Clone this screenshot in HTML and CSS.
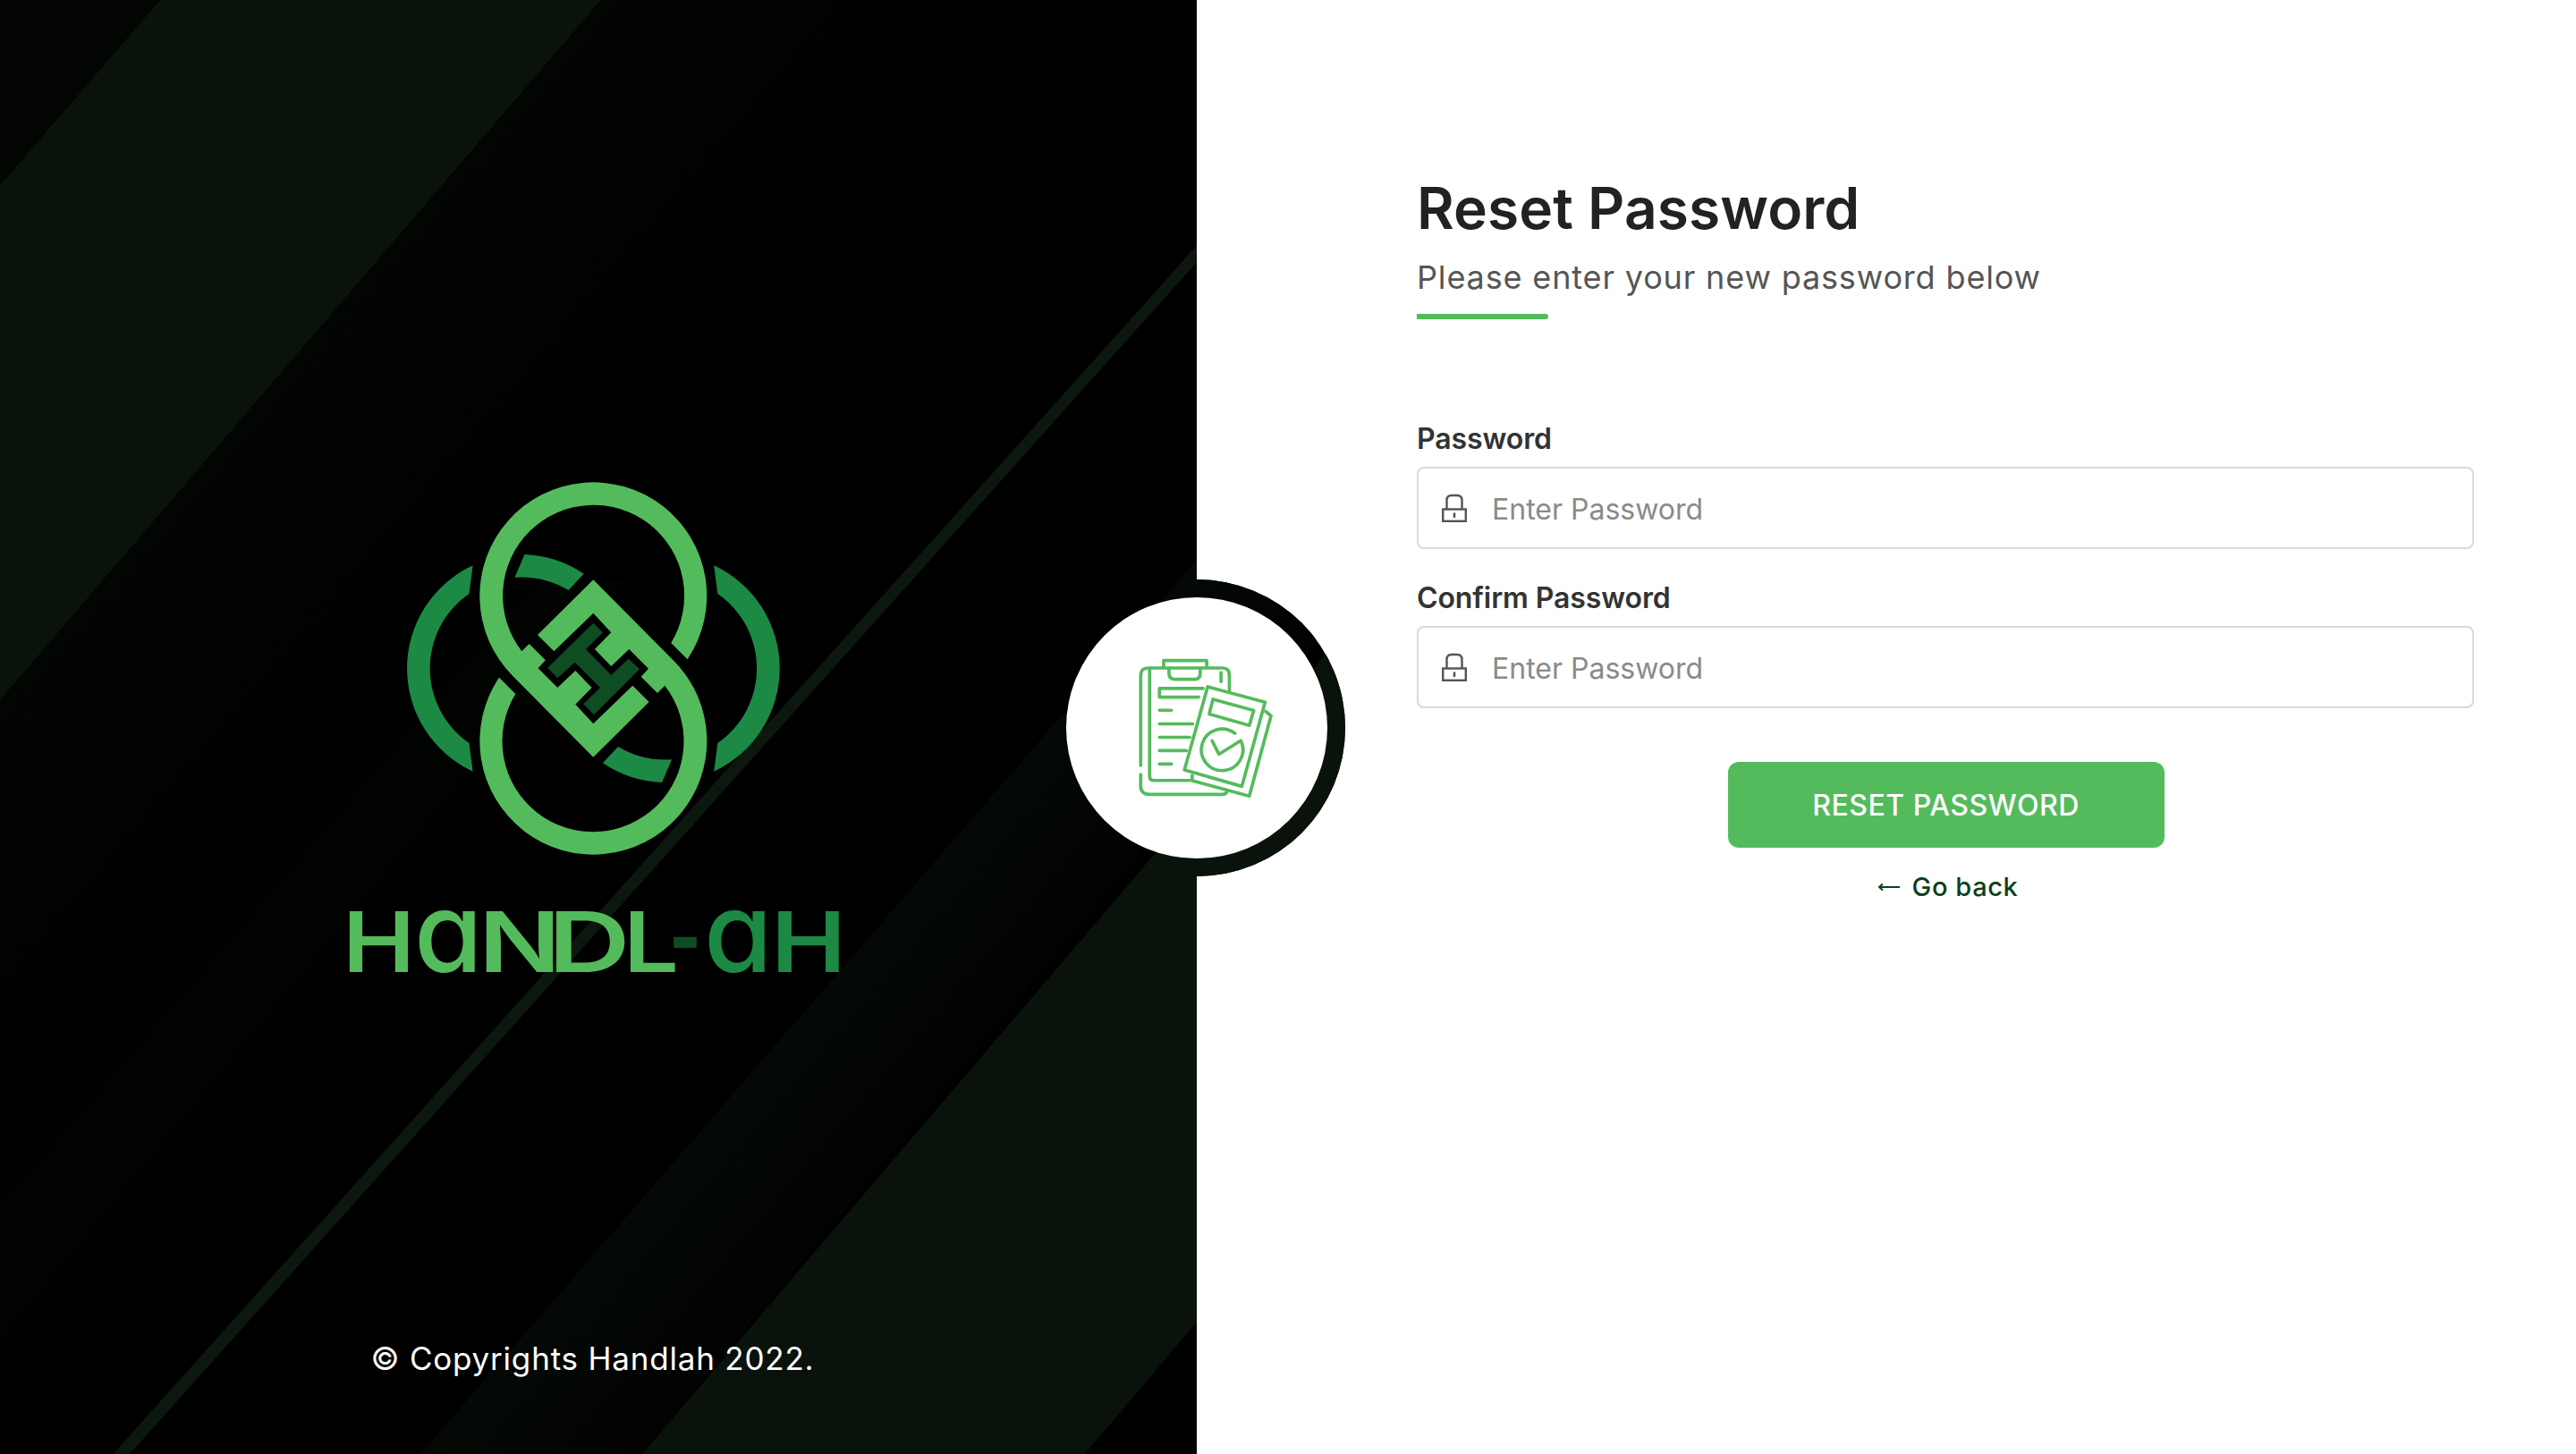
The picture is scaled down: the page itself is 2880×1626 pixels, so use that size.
FILE: index.html
```html
<!DOCTYPE html>
<html lang="en">
<head>
<meta charset="utf-8">
<title>Reset Password</title>
<link rel="stylesheet" href="styles.css">
</head>
<body>
<main class="page">
  <aside class="brand">
    <svg class="backdrop" viewBox="0 0 1510 1626" aria-hidden="true">
      <defs>
        <clipPath id="panelShape">
          <rect x="0" y="0" width="1338" height="1626"/>
          <circle cx="1338" cy="814" r="166"/>
        </clipPath>
        <linearGradient id="fadeC" gradientUnits="userSpaceOnUse" x1="927" y1="1100" x2="1066" y2="1219">
          <stop offset="0" stop-color="#040906"/>
          <stop offset="1" stop-color="#010201"/>
        </linearGradient>
        <linearGradient id="fadeA" gradientUnits="userSpaceOnUse" x1="672" y1="0" x2="900" y2="195">
          <stop offset="0" stop-color="#020502"/>
          <stop offset="1" stop-color="#000"/>
        </linearGradient>
      </defs>
      <g clip-path="url(#panelShape)">
        <rect class="bd-base" width="1510" height="1626"/>
        <polygon fill="url(#fadeA)" points="672,0 1100,0 0,1280 0,783"/>
        <polygon class="bd-corner" points="0,0 179,0 0,207"/>
        <polygon class="bd-band" points="179,0 672,0 0,783 0,207"/>
        <polygon class="bd-faint" points="0,1348 214,1100 600,650 700,650 0,1500"/>
        <polygon fill="url(#fadeC)" points="470,1626 1500,440 1700,440 718,1626"/>
        <polygon class="bd-band" points="718,1626 1167,1100 1700,476 2187,476 1213,1626"/>
        <polygon class="bd-line" points="126.5,1626 145,1626 1376.6,250 1360,250"/>
      </g>
    </svg>

    <div class="brand-body">
      <svg class="logo" viewBox="374 530 580 600" role="img" aria-label="Handl-ah logo">
        <g class="logo-dark">
          <path d="M528.6 632.3A127 127 0 0 0 528.6 862.7L524.5 831A101.5 101.5 0 0 1 524.5 664Z"/>
          <path d="M798.2 632.3A127 127 0 0 1 798.2 862.7L802.3 831A101.5 101.5 0 0 0 802.3 664Z"/>
          <path d="M586.5 620A127 127 0 0 1 652.7 641.7L635.5 660A101.5 101.5 0 0 0 575.5 645.7Z"/>
          <path d="M740.1 875A127 127 0 0 1 673.9 853.3L691.1 835A101.5 101.5 0 0 0 751.1 849.3Z"/>
        </g>
        <g class="logo-light">
          <path id="knot" d="M663.3 648.3L753.3 739A127 127 0 1 1 558 757.7L576.3 776A101.5 101.5 0 1 0 743.3 766.7L735 775L716.7 756.7L725 747.7L703.3 726L683.3 745L665 726L683.3 707.3L663.3 685.7L619.3 728.3L601 710Z"/>
          <use href="#knot" transform="rotate(180 663.3 747.5)"/>
        </g>
        <polygon class="logo-h" points="663.3,696.7 674,707.3 655,726 683.3,755 702.7,736.7 715,748.3 664,799.3 652.3,787.3 671,769 642.7,740.7 623.3,758.3 612.3,746.7"/>
        <text class="wordmark wm-light" x="383" y="1087" textLength="81" lengthAdjust="spacingAndGlyphs">H</text>
        <text class="wordmark wm-a wm-light" x="463" y="1087">a</text>
        <text class="wordmark wm-light" x="535" y="1087" textLength="92" lengthAdjust="spacingAndGlyphs">N</text>
        <text class="wordmark wm-light" x="612.7" y="1087" textLength="92" lengthAdjust="spacingAndGlyphs">D</text>
        <text class="wordmark wm-light" x="697" y="1087" textLength="62" lengthAdjust="spacingAndGlyphs">L</text>
        <text class="wordmark wm-deep" x="748" y="1081" textLength="36" lengthAdjust="spacingAndGlyphs">-</text>
        <text class="wordmark wm-a wm-dark" x="787" y="1087">a</text>
        <text class="wordmark wm-dark" x="862" y="1087" textLength="84" lengthAdjust="spacingAndGlyphs">H</text>
      </svg>
      <p class="copyright">© Copyrights Handlah 2022.</p>
    </div>

    <div class="badge">
      <svg class="badge-icon" viewBox="290 300 490 500" aria-hidden="true">
        <path d="M315 675V372Q315 347 340 347H590Q613 347 613 372V425"/>
        <path d="M315 705V745Q315 772 345 772H590Q600 772 605 764"/>
        <path d="M345 350V710Q345 725 358 725H480"/>
        <path d="M585 362V393"/>
        <path d="M392 342V322H537V342"/>
        <path d="M410 350V365Q410 385 430 385H497Q515 385 515 365V350"/>
        <path d="M525 416H378V445H510"/>
        <path d="M378 489H418M378 535H490M378 580H480M378 625H468M378 670H418"/>
        <path d="M540 410L733 462L655 745L462 690Z"/>
        <path d="M558 452L695 490L680 540L545 502Z"/>
        <path d="M632 567A70 70 0 1 0 652 592"/>
        <path d="M555 592L578 637L650 592"/>
        <path d="M735 493L753 508L680 778L488 726V708"/>
      </svg>
    </div>
  </aside>

  <section class="form-side">
    <h1 class="title">Reset Password</h1>
    <p class="subtitle">Please enter your new password below</p>
    <div class="accent"></div>

    <form class="form">
      <div class="field">
        <label class="label" for="password">Password</label>
        <div class="control">
          <svg class="lock" viewBox="0 0 28 32" aria-hidden="true">
            <path d="M5.5 18V7.5Q5.5 2 11 2H17Q22.5 2 22.5 7.5V18"/>
            <rect x="1.2" y="17.5" width="25.6" height="13.3"/>
            <path class="keyhole" d="M14 22.5V26"/>
          </svg>
          <input class="input" id="password" type="password" placeholder="Enter Password">
        </div>
      </div>
      <div class="field">
        <label class="label" for="confirm">Confirm Password</label>
        <div class="control">
          <svg class="lock" viewBox="0 0 28 32" aria-hidden="true">
            <path d="M5.5 18V7.5Q5.5 2 11 2H17Q22.5 2 22.5 7.5V18"/>
            <rect x="1.2" y="17.5" width="25.6" height="13.3"/>
            <path class="keyhole" d="M14 22.5V26"/>
          </svg>
          <input class="input" id="confirm" type="password" placeholder="Enter Password">
        </div>
      </div>
      <button class="submit" type="button">RESET PASSWORD</button>
      <a class="back" href="#">
        <svg class="back-arrow" viewBox="0 0 24 10" aria-hidden="true"><path d="M24 5H1M5 1.5L1 5L5 8.5"/></svg>
        Go back
      </a>
    </form>
  </section>
</main>
</body>
</html>
```

FILE: styles.css
```css
* { box-sizing: border-box; }

html, body {
  margin: 0;
  height: 100%;
  background: #fff;
}

body {
  font-family: "Inter", "Liberation Sans", sans-serif;
  color: #222;
}

.page {
  display: flex;
  width: 2880px;
  height: 1626px;
  overflow: hidden;
}

/* left brand panel */
.brand {
  position: relative;
  flex: 0 0 1338px;
  background: #000;
}

.backdrop {
  position: absolute;
  left: 0;
  top: 0;
  width: 1510px;
  height: 1626px;
}

.bd-base { fill: #000; }
.bd-corner { fill: #020502; }
.bd-band { fill: #09120b; }
.bd-faint { fill: #010301; }
.bd-line { fill: #0c180e; }

.brand-body {
  position: relative;
  height: 100%;
  padding: 530px 10px 0 0;
  display: flex;
  flex-direction: column;
  align-items: center;
}

.logo {
  display: block;
  width: 580px;
  height: 600px;
}

.logo-light path, .logo-light use { fill: #54bb5c; }
.logo-dark path { fill: #1c8a44; }
.logo-h { fill: #0e4c24; }

.wordmark {
  font-family: "Inter", "Liberation Sans", sans-serif;
  font-size: 93px;
  font-weight: 600;
  font-feature-settings: "cv11" 1;
}

.wm-light { fill: #54bb5c; }
.wm-dark { fill: #1c8a44; }
.wm-deep { fill: #0e4c24; font-weight: 800; }
.wm-a { font-size: 124px; font-weight: 500; }

.copyright {
  margin: 368px 0 0 -3px;
  font-size: 35px;
  line-height: 42px;
  letter-spacing: 0.8px;
  color: #fff;
}

.badge {
  position: absolute;
  left: 100%;
  top: 668px;
  width: 292px;
  height: 292px;
  margin-left: -146px;
  display: flex;
  align-items: center;
  justify-content: center;
  border-radius: 50%;
  background: #fff;
}

.badge-icon {
  width: 163px;
  height: 167px;
  margin-left: 20px;
  fill: none;
  stroke: #54bb5c;
  stroke-width: 11;
  stroke-linecap: round;
  stroke-linejoin: round;
}

/* right form panel */
.form-side {
  flex: 1;
  padding: 194px 114px 0 246px;
  background: #fff;
}

.title {
  margin: 0;
  font-size: 64px;
  line-height: 78px;
  font-weight: 600;
  letter-spacing: 0.1px;
  color: #222;
}

.subtitle {
  margin: 16px 0 0;
  font-size: 36px;
  line-height: 44px;
  letter-spacing: 0.85px;
  color: #555;
}

.accent {
  width: 147px;
  height: 6px;
  margin: 19px 0 0;
  background: #54bb5c;
  border-radius: 0 3px 3px 0;
}

.form {
  display: flex;
  flex-direction: column;
  margin-top: 114px;
}

.field + .field { margin-top: 35px; }

.label {
  display: block;
  font-size: 32px;
  line-height: 40px;
  font-weight: 600;
  letter-spacing: -0.1px;
  color: #333;
}

.control {
  display: flex;
  align-items: center;
  height: 92px;
  margin-top: 11px;
  padding-left: 26px;
  border: 2px solid #d9d9d9;
  border-radius: 8px;
  background: #fff;
}

.lock {
  flex: none;
  width: 28px;
  height: 32px;
  fill: none;
  stroke: #555;
  stroke-width: 2.4;
}

.keyhole { stroke-width: 2.6; stroke-linecap: round; }

.input {
  flex: 1;
  margin-left: 28px;
  border: 0;
  padding: 2px 0 0;
  outline: 0;
  background: transparent;
  font-family: inherit;
  font-size: 32px;
  color: #333;
}

.input::placeholder { color: #8a8a8a; opacity: 1; }

.submit {
  align-self: center;
  width: 488px;
  height: 96px;
  margin: 60px 0 0 1px;
  border: 0;
  border-radius: 12px;
  background: #54bb5c;
  font-family: inherit;
  font-size: 32px;
  font-weight: 500;
  letter-spacing: 0.5px;
  color: #fff;
}

.back {
  align-self: center;
  display: flex;
  align-items: center;
  gap: 14px;
  margin: 26px 0 0 6px;
  font-size: 29px;
  line-height: 36px;
  font-weight: 500;
  letter-spacing: 0.6px;
  color: #0e3f1c;
  text-decoration: none;
}

.back-arrow {
  width: 24px;
  height: 10px;
  fill: none;
  stroke: #0e3f1c;
  stroke-width: 2;
}
```
